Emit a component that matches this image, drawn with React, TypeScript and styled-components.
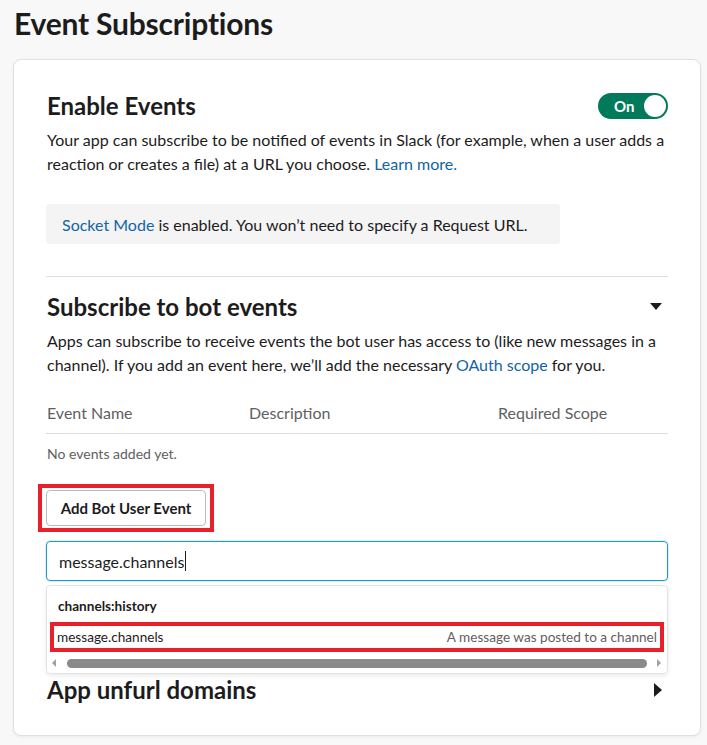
import React from "react";
import styled, { createGlobalStyle } from "styled-components";

const Global = createGlobalStyle`
  html, body { margin: 0; padding: 0; background: #f8f8f8; }
  body { font-family: Lato, "Noto Sans", sans-serif; color: #1d1c1d; }
  * { box-sizing: border-box; }
`;

const Page = styled.div`
  width: 707px;
  height: 745px;
  padding: 0 6px 0 13px;
  overflow: hidden;
`;

const Title = styled.h1`
  margin: 0;
  padding: 3px 0 0 1px;
  height: 59px;
  font-size: 30px;
  line-height: 40px;
  font-weight: 700;
  letter-spacing: -0.2px;
`;

const Card = styled.div`
  background: #fff;
  border: 1px solid #e0e0e0;
  border-radius: 8px;
  box-shadow: 0 1px 3px rgba(0, 0, 0, 0.06);
  padding: 32px 32px 31px 33px;
  display: flex;
  flex-direction: column;
`;

const HeaderRow = styled.div`
  display: flex;
  align-items: center;
  justify-content: space-between;
`;

const H2 = styled.h2`
  margin: 0;
  font-size: 24px;
  line-height: 28px;
  font-weight: 700;
`;

const Toggle = styled.div`
  width: 70px;
  height: 26px;
  border-radius: 13px;
  background: #007a5a;
  display: flex;
  align-items: center;
  justify-content: space-between;
  padding: 0 2px 0 16px;
  color: #fff;
  font-size: 15px;
  font-weight: 700;
`;

const Knob = styled.span`
  width: 22px;
  height: 22px;
  border-radius: 50%;
  background: #fff;
`;

const Para = styled.p<{ $mt?: number }>`
  margin: ${(p) => p.$mt ?? 8}px 0 0;
  font-size: 16px;
  line-height: 24px;
`;

const Link = styled.a`
  color: #1264a3;
  text-decoration: none;
`;

const Notice = styled.div`
  margin-top: 28px;
  align-self: flex-start;
  width: 514px;
  height: 40px;
  margin-left: -1px;
  padding: 0 16px;
  display: flex;
  align-items: center;
  background: #f4f4f4;
  border-radius: 4px;
  font-size: 16px;
`;

const Divider = styled.hr`
  margin: 32px 0 0 -1px;
  border: 0;
  border-top: 1px solid #dddddd;
`;

const Section = styled.div<{ $mt: number }>`
  margin-top: ${(p) => p.$mt}px;
  display: flex;
  flex-direction: column;
`;

const Caret = styled.svg`
  display: block;
  margin-right: 6px;
`;

const TableHead = styled.div`
  margin-top: 26px;
  display: grid;
  grid-template-columns: 202px 249px 1fr;
  padding-bottom: 10px;
  border-bottom: 1px solid #dddddd;
  margin-left: -1px;
  padding-left: 1px;
  font-size: 16px;
  line-height: 20px;
  color: #616061;
`;

const Empty = styled.div`
  padding-top: 10px;
  font-size: 14px;
  line-height: 20px;
  color: #616061;
`;

const Annot = styled.div<{ $pad: string }>`
  border: 4px solid #e8202a;
  padding: ${(p) => p.$pad};
`;

const ButtonAnnot = styled(Annot)`
  margin: 20px 0 0 -9px;
  align-self: flex-start;
`;

const Button = styled.button`
  height: 36px;
  width: 160px;
  display: block;
  background: #fff;
  border: 1px solid #bbbbbb;
  border-radius: 4px;
  font-family: Lato, "Noto Sans", sans-serif;
  font-size: 15px;
  font-weight: 700;
  color: #1d1c1d;
  padding: 0;
`;

const Input = styled.div`
  margin-top: 9px;
  margin-left: -1px;
  height: 40px;
  border: 1px solid #1d9bd1;
  border-radius: 4px;
  box-shadow: 0 0 0 1px rgba(29, 155, 209, 0.15);
  display: flex;
  align-items: center;
  padding: 0 12px;
  font-size: 16px;
`;

const TextCaret = styled.span`
  display: inline-block;
  width: 1px;
  height: 20px;
  background: #1d1c1d;
  margin-left: 1px;
`;

const Dropdown = styled.div`
  margin-top: 4px;
  margin-left: -1px;
  border: 1px solid #e4e4e4;
  border-radius: 4px;
  box-shadow: 0 2px 4px rgba(0, 0, 0, 0.08);
  padding: 0 3px 2px;
  display: flex;
  flex-direction: column;
`;

const GroupLabel = styled.div`
  height: 36px;
  display: flex;
  align-items: center;
  padding: 3px 0 0 8px;
  font-size: 13.6px;
  font-weight: 700;
`;

const OptionAnnot = styled(Annot)`
  height: 30px;
  display: flex;
  align-items: center;
  justify-content: space-between;
  font-size: 13.6px;
`;

const OptionDesc = styled.span`
  color: #616061;
`;

const Scrollbar = styled.div`
  height: 19px;
  display: flex;
  align-items: center;
  gap: 6px;
  padding: 3px 3px 0 2px;
`;

const Arrow = styled.span<{ $dir: "left" | "right" }>`
  width: 0;
  height: 0;
  border-top: 4px solid transparent;
  border-bottom: 4px solid transparent;
  ${(p) =>
    p.$dir === "left"
      ? "border-right: 4px solid #a0a0a0;"
      : "border-left: 4px solid #a0a0a0;"}
`;

const Thumb = styled.span`
  flex: 1;
  height: 9px;
  border-radius: 5px;
  background: #8a8a8a;
  margin: 0 4px 0 5px;
`;

function TriangleDown() {
  return (
    <Caret width="12" height="8" viewBox="0 0 12 8">
      <path d="M0 0 L12 0 L6 7 Z" fill="#1d1c1d" />
    </Caret>
  );
}

function TriangleRight() {
  return (
    <Caret width="8" height="14" viewBox="0 0 8 14">
      <path d="M0 0 L8 7 L0 14 Z" fill="#1d1c1d" />
    </Caret>
  );
}

export default function App() {
  return (
    <>
      <Global />
      <Page>
        <Title>Event Subscriptions</Title>
        <Card>
          <HeaderRow>
            <H2>Enable Events</H2>
            <Toggle>
              On
              <Knob />
            </Toggle>
          </HeaderRow>
          <Para>
            Your app can subscribe to be notified of events in Slack (for example, when a user adds a
            reaction or creates a file) at a URL you choose. <Link>Learn more.</Link>
          </Para>
          <Notice>
            <Link>Socket Mode</Link>&nbsp;is enabled. You won’t need to specify a Request URL.
          </Notice>
          <Divider />
          <Section $mt={16}>
            <HeaderRow>
              <H2>Subscribe to bot events</H2>
              <TriangleDown />
            </HeaderRow>
            <Para>
              Apps can subscribe to receive events the bot user has access to (like new messages in a
              channel). If you add an event here, we’ll add the necessary <Link>OAuth scope</Link> for
              you.
            </Para>
            <TableHead>
              <span>Event Name</span>
              <span>Description</span>
              <span>Required Scope</span>
            </TableHead>
            <Empty>No events added yet.</Empty>
            <ButtonAnnot $pad="2px 4px">
              <Button>Add Bot User Event</Button>
            </ButtonAnnot>
            <Input>
              message.channels
              <TextCaret />
            </Input>
            <Dropdown>
              <GroupLabel>channels:history</GroupLabel>
              <OptionAnnot $pad="0 3px">
                <span>message.channels</span>
                <OptionDesc>A message was posted to a channel</OptionDesc>
              </OptionAnnot>
              <Scrollbar>
                <Arrow $dir="left" />
                <Thumb />
                <Arrow $dir="right" />
              </Scrollbar>
            </Dropdown>
          </Section>
          <Section $mt={2}>
            <HeaderRow>
              <H2>App unfurl domains</H2>
              <TriangleRight />
            </HeaderRow>
          </Section>
        </Card>
      </Page>
    </>
  );
}
